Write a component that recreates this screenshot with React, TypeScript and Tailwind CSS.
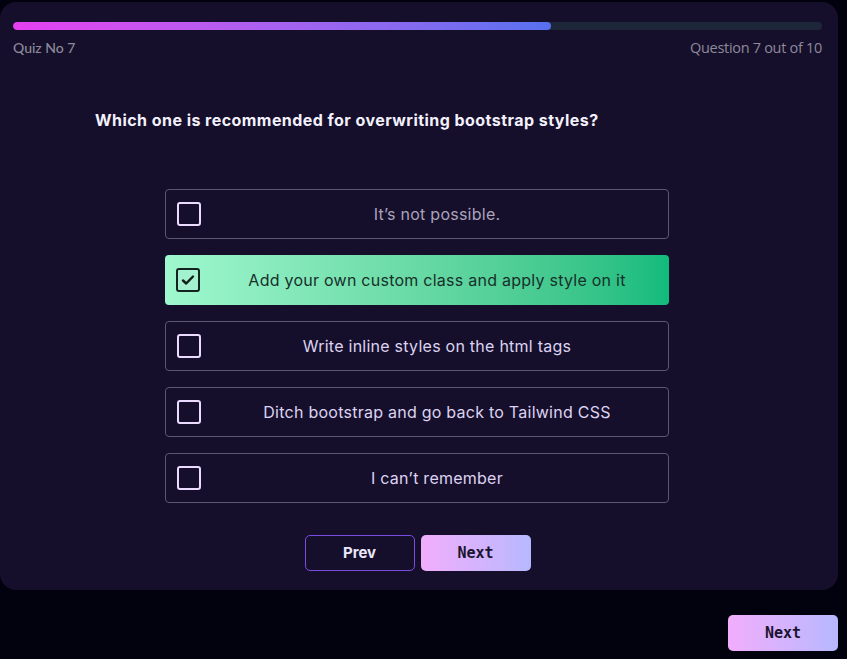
import React, { useState } from 'react';

const options = [
  "It’s not possible.",
  'Add your own custom class and apply style on it',
  'Write inline styles on the html tags',
  'Ditch bootstrap and go back to Tailwind CSS',
  'I can’t remember',
];

const Check = () => (
  <svg width="14" height="12" viewBox="0 0 14 12" fill="none">
    <path d="M2 6.5l3.2 3L12 2.5" stroke="#0f1f18" strokeWidth="2.4" strokeLinecap="round" strokeLinejoin="round" />
  </svg>
);

export default function App() {
  const [selected, setSelected] = useState(1);

  return (
    <div className="w-[847px] h-[659px] bg-[#02020f] flex flex-col font-['Inter',sans-serif]">
      <div className="mt-[2px] w-[838px] h-[588px] bg-[#150f2b] rounded-2xl flex flex-col pl-[13px] pr-[16px] pt-[20px]">
        <div className="h-[8px] w-full rounded-full bg-[#1e2639] overflow-hidden">
          <div className="h-full w-[538px] rounded-full bg-gradient-to-r from-[#e63ef0] to-[#5670f0]" />
        </div>
        <div className="flex justify-between mt-[7px] text-[14px] text-[#8d8a9c]">
          <span className="font-['Lato',sans-serif] font-medium">Quiz No 7</span>
          <span className="font-['Open_Sans',sans-serif] text-[14.5px] tracking-[-0.3px]">Question 7 out of 10</span>
        </div>

        <h1 className="ml-[82px] mt-[49px] text-[16px] font-bold text-[#f3f1fb] tracking-[0.45px]">
          Which one is recommended for overwriting bootstrap styles?
        </h1>

        <div className="flex flex-col gap-[16px] mt-[57px] ml-[152px] w-[504px]">
          {options.map((o, i) => {
            const on = i === selected;
            return (
              <button
                key={i}
                onClick={() => setSelected(i)}
                className={`h-[50px] flex items-center rounded-[4px] px-[11px] text-[16px] tracking-[0.25px] ${
                  on
                    ? 'bg-gradient-to-r from-[#9ff8cf] to-[#10bb7d] text-[#17302a]'
                    : 'border border-[#5d566f] text-[#ddd3f1]'
                }`}
              >
                <span
                  className={`w-[24px] h-[24px] rounded-[3px] border-2 flex items-center justify-center shrink-0 ${
                    on ? 'border-[#12241d] bg-[#a3f1cf]' : 'border-[#ebdcff]'
                  }`}
                >
                  {on && <Check />}
                </span>
                <span className={`flex-1 text-center pl-[16px] ${i === 0 ? 'text-[#aaa3bb]' : ''}`}>{o}</span>
              </button>
            );
          })}
        </div>

        <div className="flex justify-center gap-[6px] mt-[32px]">
          <button className="w-[110px] h-[36px] rounded-[5px] border border-[#7b4ce0] text-[#ece6fb] font-bold text-[15px]">
            Prev
          </button>
          <button className="w-[110px] h-[36px] rounded-[5px] bg-gradient-to-r from-[#f1adfc] to-[#b6b8fe] text-[#1c1430] font-bold text-[15px] font-['DejaVu_Sans_Mono',monospace]">
            Next
          </button>
        </div>
      </div>

      <div className="flex justify-end pr-[9px] mt-[25px]">
        <button className="w-[110px] h-[36px] rounded-[5px] bg-gradient-to-r from-[#f1adfc] to-[#b6b8fe] text-[#1c1430] font-bold text-[15px] font-['DejaVu_Sans_Mono',monospace]">
          Next
        </button>
      </div>
    </div>
  );
}
